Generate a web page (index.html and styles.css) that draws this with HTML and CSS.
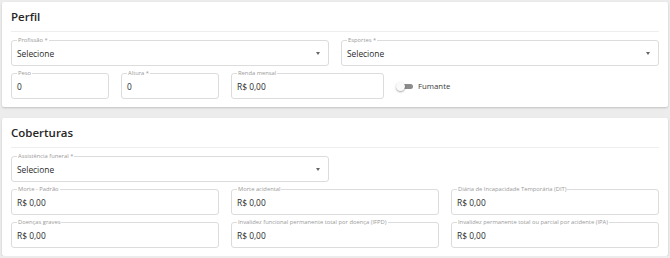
FILE: index.html
```html
<!DOCTYPE html>
<html lang="pt-BR">
<head>
<meta charset="utf-8">
<link rel="stylesheet" href="styles.css">
</head>
<body>
<div class="page">
  <section class="card">
    <header class="card-title">Perfil</header>
    <div class="grid">
      <div class="field span6"><span class="label">Profissão *</span><span class="value">Selecione</span><span class="arrow"></span></div>
      <div class="field span6"><span class="label">Esportes *</span><span class="value">Selecione</span><span class="arrow"></span></div>
      <div class="field span2"><span class="label">Peso</span><span class="value">0</span></div>
      <div class="field span2"><span class="label">Altura *</span><span class="value">0</span></div>
      <div class="field span3"><span class="label">Renda mensal</span><span class="value">R$ 0,00</span></div>
      <div class="switch-wrap span5"><span class="switch"><span class="track"></span><span class="thumb"></span></span><span class="switch-label">Fumante</span></div>
    </div>
  </section>
  <section class="card">
    <header class="card-title">Coberturas</header>
    <div class="grid">
      <div class="field span6"><span class="label">Assistência funeral *</span><span class="value">Selecione</span><span class="arrow"></span></div>
      <div class="span6"></div>
      <div class="field span4"><span class="label">Morte - Padrão</span><span class="value">R$ 0,00</span></div>
      <div class="field span4"><span class="label">Morte acidental</span><span class="value">R$ 0,00</span></div>
      <div class="field span4"><span class="label">Diária de Incapacidade Temporária (DIT)</span><span class="value">R$ 0,00</span></div>
      <div class="field span4"><span class="label">Doenças graves</span><span class="value">R$ 0,00</span></div>
      <div class="field span4"><span class="label">Invalidez funcional permanente total por doença (IFPD)</span><span class="value">R$ 0,00</span></div>
      <div class="field span4"><span class="label">Invalidez permanente total ou parcial por acidente (IPA)</span><span class="value">R$ 0,00</span></div>
    </div>
  </section>
</div>
</body>
</html>
```
FILE: styles.css
```css
html, body {
  margin: 0;
  padding: 0;
  background: #ececec;
  font-family: "Open Sans", "Liberation Sans", sans-serif;
}
.page {
  padding: 2px 2px 0 2px;
  display: flex;
  flex-direction: column;
  gap: 11px;
}
.card {
  background: #fff;
  border-radius: 2px;
  box-shadow: 0 1px 2px rgba(0,0,0,0.18);
  padding: 0 9px 8px 9px;
}
.card-title {
  height: 30px;
  display: flex;
  align-items: center;
  font-size: 11.5px;
  font-weight: 600;
  color: #262626;
  border-bottom: 1px solid #eeeeee;
  box-sizing: border-box;
}
.grid {
  padding-top: 8px;
  display: grid;
  grid-template-columns: repeat(12, 1fr);
  column-gap: 12px;
  row-gap: 7px;
}
.span2 { grid-column: span 2; }
.span3 { grid-column: span 3; }
.span4 { grid-column: span 4; }
.span5 { grid-column: span 5; }
.span6 { grid-column: span 6; }
.field {
  position: relative;
  height: 26px;
  box-sizing: border-box;
  border: 1px solid #dcdcdc;
  border-radius: 3px;
  display: flex;
  align-items: center;
  padding: 0 5px;
}
.label {
  position: absolute;
  left: 5px;
  top: -4px;
  font-size: 5.8px;
  line-height: 7px;
  color: #9a9a9a;
  background: #fff;
  padding: 0 1px;
  white-space: nowrap;
}
.value {
  font-size: 8.4px;
  color: #2a2a2a;
  padding-top: 1px;
}
.arrow {
  position: absolute;
  right: 8px;
  top: 11px;
  width: 0;
  height: 0;
  border-left: 2.5px solid transparent;
  border-right: 2.5px solid transparent;
  border-top: 3px solid #666;
}
.switch-wrap {
  display: flex;
  align-items: center;
  padding-left: 0;
  gap: 5px;
}
.switch {
  position: relative;
  width: 17px;
  height: 9px;
  display: block;
}
.track {
  position: absolute;
  left: 3px;
  top: 2px;
  width: 14px;
  height: 5px;
  border-radius: 3px;
  background: #8c8c8c;
}
.thumb {
  position: absolute;
  left: 0;
  top: 0;
  width: 9px;
  height: 9px;
  border-radius: 50%;
  background: #fafafa;
  box-shadow: 0 1px 2px rgba(0,0,0,0.35);
}
.switch-label {
  font-size: 7.8px;
  color: #3a3a3a;
}
```
